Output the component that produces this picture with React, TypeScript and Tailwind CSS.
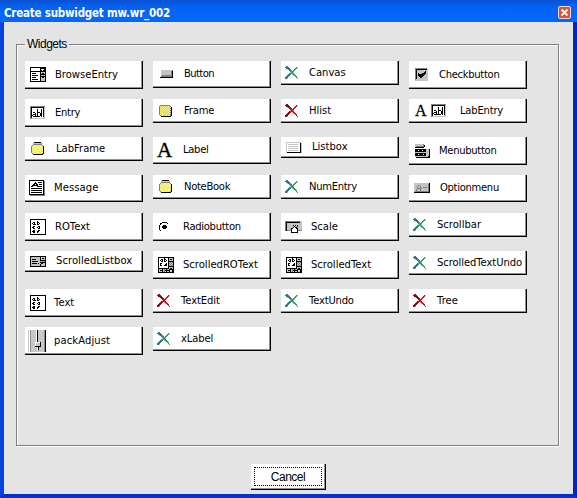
import React from "react";

const palette: Record<string, string> = {
  k: "#000000",
  d: "#808080",
  l: "#c4c4c4",
  w: "#ffffff",
  y: "#f5f07c",
  o: "#dcd850",
  r: "#c01818",
  R: "#8a0c10",
  p: "#e8a0a0",
  g: "#2f9c6c",
  G: "#39758c",
  t: "#98cdb4",
};

function Pixels({ rows }: { rows: string[] }) {
  const w = Math.max(...rows.map((r) => r.length));
  return (
    <svg width={w} height={rows.length} viewBox={`0 0 ${w} ${rows.length}`} shapeRendering="crispEdges" className="block shrink-0">
      {rows.flatMap((row, y) =>
        row.split("").map((c, x) => (palette[c] ? <rect key={`${x}-${y}`} x={x} y={y} width="1" height="1" fill={palette[c]} /> : null)),
      )}
    </svg>
  );
}

const cross = [
  ".GG..........",
  "GGGG.......gt",
  ".GGGG.....gg.",
  "..tGGg...gg..",
  "....GGg.gg...",
  ".....gggg....",
  ".....tggt....",
  "....ggggg....",
  "...GGg.tgg...",
  "..GGg...tgg..",
  ".GGG......gg.",
  "GGG........g.",
  "GGt.........g",
  ".............",
];

const art: Record<string, string[]> = {
  browse: [
    "kkkkkkkkkkkkkkkk",
    "k.........kkkkkk",
    "k.........kwwwkk",
    "k.........kkwkkk",
    "kkkkkkkkkkkkkkkk",
    "k.........kllllk",
    "k.kkkk....klkklk",
    "k.........kkkkkk",
    "k.kkkkkk..klldlk",
    "k.........kkkkkk",
    "k.kkkk....klkklk",
    "k.........kllllk",
    "k.kkkkkk..kllllk",
    "k.........kllllk",
    "kkkkkkkkkkkkkkkk",
  ],
  button: [
    ".llllllllllld",
    ".lllllllllldk",
    ".lllllllllldk",
    ".lllllllllldk",
    ".lllllllllldk",
    ".lddddddddddk",
    ".dddddddddddk",
    "kkkkkkkkkkkkk",
  ],
  green: cross,
  red: cross.map((r) => r.replace(/G/g, "R").replace(/g/g, "r").replace(/t/g, "p")),
  check: [
    "ddddddddddddl",
    "dkkkkkkkkkkkl",
    "dklllllllllll",
    "dkllllllllkll",
    "dklllllllkkll",
    "dklklllkkkkll",
    "dklkkkkkkklll",
    "dklkkkkkkllll",
    "dkllkkkklllll",
    "dklllkkllllll",
    "dklllllllllll",
    "dllllllllllll",
    "lllllllllllll",
  ],
  entry: [
    "ddddddddddddddd",
    "dkkkkkkkkkkkkkl",
    "dk...........kl",
    "dk.....k...k.kl",
    "dk.....k...k.kl",
    "dk.....k...k.kl",
    "dk.kk..kkk.k.kl",
    "dk...k.k..kk.kl",
    "dk.kkk.k..kk.kl",
    "dkk..k.k..kk.kl",
    "dk.kkkkkkk.k.kl",
    "dk...........ll",
    "dllllllllllllll",
  ],
  frame: [
    ".dddddddddd..",
    "dyoyoyoyoyod.",
    "doyoyoyoyoyok",
    "dyoyoyoyoyodk",
    "doyoyoyoyoyok",
    "dyoyoyoyoyodk",
    "doyoyoyoyoyok",
    "dyoyoyoyoyodk",
    "doyoyoyoyoyok",
    "dyoyoyoyoyodk",
    ".doyoyoyoyodk",
    "..kkkkkkkkkk.",
  ],
  folder: [
    "...kkkkkkk...",
    "..lllllllld..",
    "..ddddddddd..",
    ".dyyyyyyyyyd.",
    "dyyyyyyyyyyyk",
    "dyyyyyyyyyyyk",
    "dyyyyyyyyyyyk",
    "dyyyyyyyyyyyk",
    "dyyyyyyyyyyyk",
    "dyyyyyyyyyyyk",
    "dyyyyyyyyyyyk",
    ".dyyyyyyyyydk",
    "..kkkkkkkkkk.",
  ],
  listbox: [
    "lllllllllllllll.",
    "l.............kl",
    "l.llllllllll..kl",
    "l.............kl",
    "l.llllllllll..kl",
    "l.............kl",
    "l.llllllllll..kl",
    "l.............kl",
    "l.llllllllll..kl",
    "l.............kl",
    "lkkkkkkkkkkkkkkl",
  ],
  menu: [
    "lllllllld......",
    "lllllllldk.....",
    "lddddddddk.....",
    "kkkkkkkkk......",
    "...............",
    "kkkkkkkkkkklllk",
    "kkkwkkkwkkklllk",
    "kkkkkkkkkkklllk",
    "llllllllllllllk",
    "kkkkkkkkkkklllk",
    "kkkwkkkkwkklllk",
    "kkkkkkkkkkklllk",
    "lllllllllllllkk",
    ".kkkkkkkkkkkkkk",
  ],
  option: [
    "lllllllllllllllk",
    "lllllllllllllldk",
    "llllddlllllllldk",
    "llldlldllllllldk",
    "llldlldllddddldk",
    "llldddddlllllldk",
    "lldllldllllllldk",
    "lldllldllllllldk",
    "lddddddddddddddk",
    "kkkkkkkkkkkkkkkk",
  ],
  message: [
    "kkkkkkkkkkkkkkk.",
    "k.............kd",
    "k.....k..kkkk.kd",
    "k....kkk......kd",
    "k...kk.kk.kkk.kd",
    "k..kkkkkk.....kd",
    "k.kk....kkkkk.kd",
    "k.............kd",
    "k.kkkkkkkkkkk.kd",
    "k.............kd",
    "k.kkkkkkkkkkk.kd",
    "k.............kd",
    "k.kkkkkkkkkkk.kd",
    "k.............kd",
    "kkkkkkkkkkkkkkkd",
    ".ddddddddddddddd",
  ],
  text: [
    "kkkkkkkkkkkkkkkk",
    "k..............k",
    "k......k.......k",
    "k..kk..kk......k",
    "k.k.k..k.k.....k",
    "k..kkk.kk......k",
    "k..............k",
    "k..kk...kk.....k",
    "k.kk...k.k.....k",
    "k..kk...kk.....k",
    "k..............k",
    "k..kk...kk.....k",
    "k.kkk..kk......k",
    "k..kk..k.......k",
    "k..............k",
    "kkkkkkkkkkkkkkkk",
  ],
  radio: [
    "...kkkkk..",
    ".kk.....k.",
    ".k........",
    "k...kkk...",
    "k..kkkkk..",
    "k..kkkkk..",
    "k...kkk...",
    "k.........",
    ".k........",
    "..........",
  ],
  scale: [
    "dddddddddddddddll",
    "dkkkkkkkkkkkkkkll",
    "dklllllllllllllll",
    "dklllllllllllllll",
    "dkllllllklklkllll",
    "dklllllllkllkllll",
    "dkllllllkwkklllll",
    "dkllllkkwwwkkllll",
    "dkllldkwwwwwkllll",
    "dkdddlkwwwwwkdddd",
    "......kwwwwwk....",
    "......kkkkkkk....",
  ],
  scrolltext: [
    "kkkkkkkkkkkkkkkk",
    "k.....k...kllllk",
    "k..kk.kk..klkklk",
    "k.k.k.k.k.kllllk",
    "k..kk.kk..kkkkkk",
    "k.........kldldk",
    "k.kk....k.kdldlk",
    "k.k....kk.kldldk",
    "k.kk..kkk.kdldlk",
    "k.........kkkkkk",
    "k.........kllllk",
    "kkkkkkkkkkklkklk",
    "klllkldlkllkkkkk",
    "klkkkldkkkkkllkk",
    "klllkldlkllkllkk",
    "kkkkkkkkkkkkkkkk",
  ],
  scrolllist: [
    "kkkkkkkkkkkkkkkk",
    "klllllllllkllllk",
    "klllllllllklkklk",
    "klkkkkllllkllllk",
    "klllllllllkkkkkk",
    "klkkkkkklldldldk",
    "klllllllllkkkkkk",
    "klkkkkklkllkkllk",
    "klllllllllkllllk",
    "klllllllllkllllk",
    "kkkkkkkkkkkkkkkk",
  ],
};

function PackIcon() {
  return (
    <svg width="19" height="22" viewBox="0 0 19 22" shapeRendering="crispEdges" className="block shrink-0">
      <path fill="#c8c8c8" d="M0 0h1v22H0zM3 0h13v22H3z" />
      <path fill="#909090" d="M2 0h1v22H2zM16 0h1v22H16z" />
      <path fill="#000" d="M17 0h1v22h-1zM9 0h1v12H9zM12 12h1v5h-2v3h-1v-4h2zM7 16h3v1H7z" />
      <path fill="#fff" d="M8 0h1v12H8zM7 12h5v1H8v3H7zM9 17h1v3H9z" />
    </svg>
  );
}

function LetterA({ size }: { size: "large" | "small" }) {
  return (
    <span className={`font-['Liberation_Serif',serif] leading-none ${size === "large" ? "text-[21px] [-webkit-text-stroke:0.4px_black]" : "text-[16px] [-webkit-text-stroke:0.3px_black]"}`}>A</span>
  );
}

type Item = [label: string, icon: string, height: string, iconPad: string, textPad: string, tracking: string];

const H28 = "h-[28px]";
const H27 = "h-[27px]";
const H24 = "h-[24px]";
const H21 = "h-[21px]";

const items: Item[] = [
  ["BrowseEntry", "browse", H28, "pl-[5px]", "w-[30px]", ""],
  ["Button", "button", H27, "pl-[7px]", "w-[31px]", "tracking-[-0.6px]"],
  ["Canvas", "green", H24, "pl-[4px]", "w-[28px]", ""],
  ["Checkbutton", "check", H28, "pl-[6px]", "w-[30px]", "tracking-[-0.3px]"],
  ["Entry", "entry", H28, "pl-[5px]", "w-[30px]", "tracking-[-0.3px]"],
  ["Frame", "frame", H24, "pl-[6px]", "w-[31px]", "tracking-[-0.2px]"],
  ["Hlist", "red", H24, "pl-[4px]", "w-[28px]", ""],
  ["LabEntry", "labentry", H24, "pl-[6px]", "w-[51px]", "tracking-[-0.2px]"],
  ["LabFrame", "folder", H24, "pl-[6px]", "w-[31px]", ""],
  ["Label", "A", H27, "pl-[4px]", "w-[30px]", "tracking-[-0.3px]"],
  ["Listbox", "listbox", H21, "pl-[5px]", "w-[31px]", ""],
  ["Menubutton", "menu", H28, "pl-[6px]", "w-[30px]", "tracking-[-0.3px]"],
  ["Message", "message", H27, "pl-[4px]", "w-[29px]", "tracking-[0.1px]"],
  ["NoteBook", "folder", H24, "pl-[6px]", "w-[31px]", "tracking-[-0.3px]"],
  ["NumEntry", "green", H24, "pl-[4px]", "w-[28px]", "tracking-[-0.3px]"],
  ["Optionmenu", "option", H27, "pl-[5px]", "w-[31px]", "tracking-[-0.3px]"],
  ["ROText", "text", H28, "pl-[5px]", "w-[30px]", ""],
  ["Radiobutton", "radio", H28, "pl-[6px]", "w-[30px]", "tracking-[-0.3px]"],
  ["Scale", "scale", H28, "pl-[4px]", "w-[30px]", ""],
  ["Scrollbar", "green", H24, "pl-[4px]", "w-[28px]", ""],
  ["ScrolledListbox", "scrolllist", H21, "pl-[5px]", "w-[31px]", "tracking-[0.05px]"],
  ["ScrolledROText", "scrolltext", H28, "pl-[5px]", "w-[30px]", ""],
  ["ScrolledText", "scrolltext", H28, "pl-[5px]", "w-[30px]", ""],
  ["ScrolledTextUndo", "green", H24, "pl-[4px]", "w-[28px]", "tracking-[-0.08px]"],
  ["Text", "text", H28, "pl-[5px]", "w-[29px]", ""],
  ["TextEdit", "red", H24, "pl-[4px]", "w-[28px]", "tracking-[-0.1px]"],
  ["TextUndo", "green", H24, "pl-[4px]", "w-[28px]", "tracking-[-0.2px]"],
  ["Tree", "red", H24, "pl-[4px]", "w-[28px]", ""],
  ["packAdjust", "pack", H28, "pl-[3px]", "w-[29px]", "tracking-[0.1px]"],
  ["xLabel", "green", H24, "pl-[4px]", "w-[28px]", "tracking-[-0.1px]"],
];

function Icon({ name }: { name: string }) {
  if (name === "pack") return <PackIcon />;
  if (name === "A") return <LetterA size="large" />;
  if (name === "labentry")
    return (
      <span className="flex items-center gap-[4px]">
        <LetterA size="small" />
        <Pixels rows={art.entry} />
      </span>
    );
  return <Pixels rows={art[name]} />;
}

function WidgetButton({ item }: { item: Item }) {
  const [label, icon, height, iconPad, textPad, tracking] = item;
  return (
    <button className={`flex w-[118px] items-center border-r border-b border-black bg-white text-left shadow-[inset_-1px_-1px_0_#909090] ${height}`}>
      <span className={`flex shrink-0 items-center ${iconPad} ${textPad}`}>
        <Icon name={icon} />
      </span>
      <span className={`font-['DejaVu_Sans',sans-serif] text-[10px] leading-[12px] whitespace-nowrap text-black ${tracking}`}>{label}</span>
    </button>
  );
}

export default function App() {
  return (
    <div className="flex h-[498px] w-[577px] flex-col bg-[#0a3fd8]">
      <header className="flex h-[22px] shrink-0 items-center justify-between bg-linear-to-b from-[#0a4fd0] via-[#0563f2] via-30% to-[#0468ff] pt-[3px] pr-[6px] pl-[4px]">
        <h1 className="pt-px font-['DejaVu_Sans_Condensed','DejaVu_Sans',sans-serif] text-[11.5px] leading-[14px] font-bold tracking-[-0.22px] whitespace-nowrap text-white">Create subwidget mw.wr_002</h1>
        <button aria-label="Close" className="flex h-[13px] w-[13px] items-center justify-center rounded-[2px] border border-[#f4d5cf] bg-[#d5573a]">
          <svg width="9" height="9" viewBox="0 0 9 9" className="block">
            <path d="M1.5 1.5l6 6m0-6l-6 6" stroke="white" strokeWidth="1.8" />
          </svg>
        </button>
      </header>
      <div className="flex min-h-0 flex-1 border-t-0 border-r-4 border-b-4 border-l-4 border-r-[#0425b8] border-b-[#0632cc] border-l-[#0744dc]">
        <main className="flex flex-1 flex-col items-center bg-[#e4e4e4] pt-[15px]">
          <fieldset className="mr-[2px] flex h-[409px] w-[543px] flex-col border border-[#808080] pl-[8px] shadow-[1px_1px_0_white,inset_1px_1px_0_#fffff0]">
            <legend className="h-[14px] px-[2px] font-['Liberation_Sans',Arial,sans-serif] text-[12px] leading-[14px] tracking-[-0.5px] text-black">Widgets</legend>
            <div className="grid auto-rows-[38px] grid-cols-[repeat(4,128px)] items-start pt-[10px]">
              {items.map((item) => (
                <WidgetButton key={item[0]} item={item} />
              ))}
            </div>
          </fieldset>
          <button className="mt-[18px] flex h-[26px] w-[75px] border-r border-b border-black bg-white p-[3px] shadow-[inset_-1px_-1px_0_#909090]">
            <span className="flex flex-1 items-center justify-center border border-dotted border-black font-['Liberation_Sans',Arial,sans-serif] text-[12px] leading-none tracking-[-0.5px] text-black">Cancel</span>
          </button>
        </main>
      </div>
    </div>
  );
}
